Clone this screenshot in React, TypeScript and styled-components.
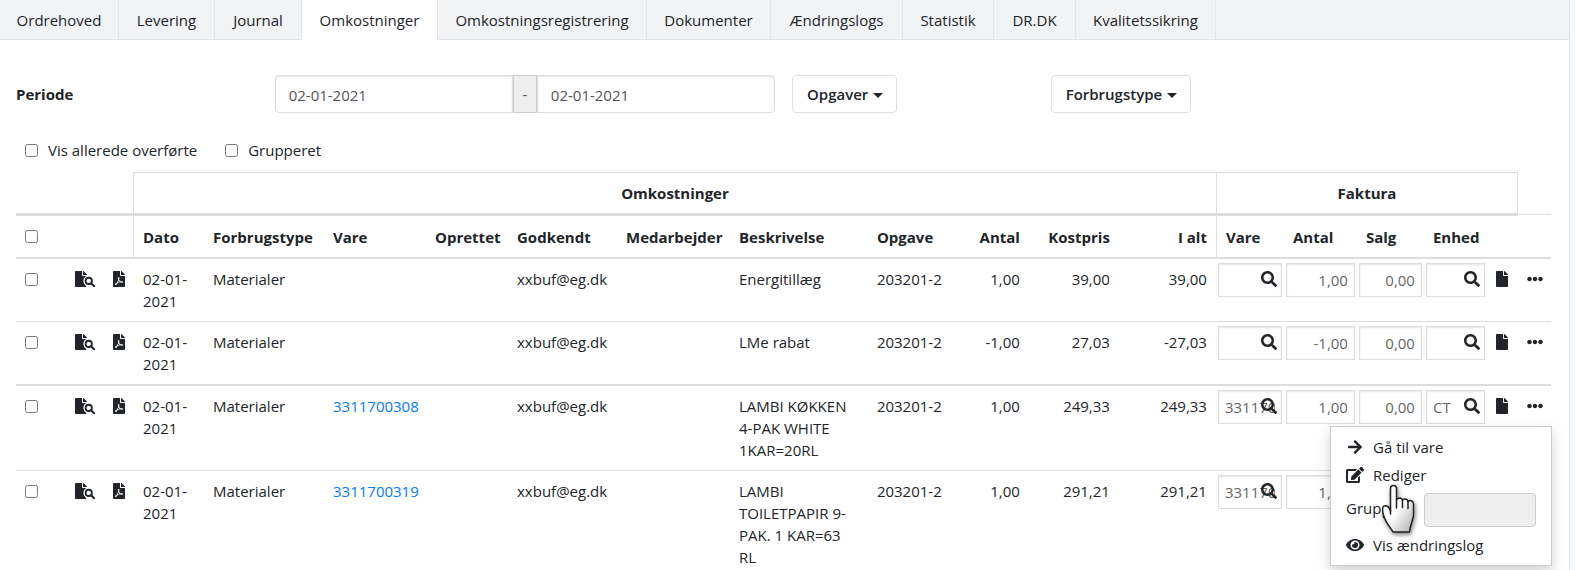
import React from "react";
import styled, { createGlobalStyle, css } from "styled-components";
import {
  FaArrowRight,
  FaEdit,
  FaEllipsisH,
  FaEye,
  FaFile,
  FaFilePdf,
  FaSearch,
} from "react-icons/fa";

const ink = "#212529";
const line = "#dddddd";

const GlobalStyle = createGlobalStyle`
  * { box-sizing: border-box; }
  body {
    margin: 0;
    background: #f8f9fb;
    color: ${ink};
    font-family: "Open Sans", "Noto Sans", sans-serif;
    font-size: 15px;
    line-height: 22px;
  }
  button, input { font: inherit; color: inherit; }
`;

const Panel = styled.main`
  margin-right: 5px;
  min-height: 100vh;
  background: #fff;
  border-right: 1px solid #e3e5e8;
`;

const Tabs = styled.nav`
  display: flex;
  height: 40px;
  background: #f2f3f5;
  box-shadow: inset 0 -1px #e3e5e8;
`;

const Tab = styled.a<{ $width: number; $active?: boolean }>`
  width: ${(p) => p.$width}px;
  display: flex;
  align-items: center;
  justify-content: center;
  border-right: 1px solid #e3e5e8;
  color: ${ink};
  text-decoration: none;
  white-space: nowrap;
  ${(p) => p.$active && css`background: #fff;`}
`;

const Filters = styled.div`
  display: grid;
  grid-template-columns: 2fr 4fr 2fr 4fr;
  align-items: center;
  padding: 35px 1px 0 16px;
`;

const FilterLabel = styled.label`
  font-weight: 700;
`;

const DateRange = styled.div`
  display: flex;
  height: 38px;
  margin-right: 17px;
`;

const DateInput = styled.input<{ $side: "left" | "right" }>`
  flex: 1;
  min-width: 0;
  padding: 2px 13px 0;
  border: 1px solid ${line};
  border-radius: ${(p) => (p.$side === "left" ? "4px 0 0 4px" : "0 4px 4px 0")};
  box-shadow: inset 0 1px 2px rgba(0, 0, 0, 0.1);
  color: #555;
  outline: none;
`;

const RangeDash = styled.span`
  width: 24px;
  display: flex;
  align-items: center;
  justify-content: center;
  border: 1px solid #ccc;
  background: #eee;
  color: #555;
`;

const DropButton = styled.button`
  justify-self: start;
  display: flex;
  align-items: center;
  gap: 5px;
  height: 38px;
  padding: 0 13px 0 14px;
  border: 1px solid ${line};
  border-radius: 4px;
  background: #fff;
  font-weight: 600;
`;

const Caret = styled.span`
  margin-top: 2px;
  border: solid transparent;
  border-width: 5px 5px 0;
  border-top-color: ${ink};
`;

const Options = styled.div`
  display: flex;
  gap: 28px;
  padding: 26px 25px 11px;
`;

const Option = styled.label`
  display: flex;
  align-items: center;
  gap: 10px;
`;

const Check = styled.input.attrs({ type: "checkbox" })`
  display: block;
  width: 13px;
  height: 13px;
  margin: 0;
`;

const Table = styled.table`
  width: calc(100% - 34px);
  margin-left: 16px;
  table-layout: fixed;
  border-collapse: separate;
  border-spacing: 0;
`;

const GroupCell = styled.th<{ $kind: "blank" | "title" | "last" | "end" }>`
  height: 43px;
  padding: 0;
  text-align: center;
  border-bottom: ${(p) => (p.$kind === "end" ? 1 : 2)}px solid ${line};
  ${(p) =>
    (p.$kind === "title" || p.$kind === "last") &&
    css`
      border-top: 1px solid ${line};
      border-left: 1px solid ${line};
    `}
  ${(p) => p.$kind === "last" && css`border-right: 1px solid ${line};`}
`;

const HeadCell = styled.th<{ $right?: boolean; $divider?: boolean; $open?: boolean }>`
  height: 44px;
  padding: 0 9px;
  text-align: ${(p) => (p.$right ? "right" : "left")};
  white-space: nowrap;
  border-top: 1px solid ${(p) => (p.$open ? "transparent" : line)};
  border-bottom: 2px solid ${line};
  ${(p) => p.$divider && css`border-left: 1px solid ${line};`}
`;

const Row = styled.tr<{ $rule: number }>`
  > td {
    border-top: ${(p) => p.$rule}px solid ${line};
  }
`;

const Cell = styled.td<{ $right?: boolean; $indent?: boolean }>`
  padding: 9px;
  vertical-align: top;
  text-align: ${(p) => (p.$right ? "right" : "left")};
  ${(p) => p.$indent && css`padding-left: 10px;`}
`;

const CheckCell = styled(Cell)`
  padding: 14px 0 0 9px;
`;

const IconCell = styled(Cell)`
  padding: 12px 0 0 9px;
`;

const FieldCell = styled(Cell)`
  padding: 4px 2px 0;
`;

const MenuCell = styled(IconCell)`
  position: relative;
`;

const IconButton = styled.button<{ $width?: number }>`
  display: block;
  padding: 0;
  border: 0;
  background: none;
  line-height: 0;
  font-size: 16px;
  cursor: pointer;

  svg {
    width: ${(p) => p.$width ?? 16}px;
    height: 16px;
  }
`;

const ItemLink = styled.a`
  color: #007bff;
  text-decoration: none;
`;

const Field = styled.div`
  position: relative;
`;

const FieldInput = styled.input<{ $right?: boolean }>`
  display: block;
  width: 100%;
  height: 34px;
  padding: 0 6px;
  border: 1px solid ${line};
  background: #fff;
  box-shadow: inset 0 1px 2px rgba(0, 0, 0, 0.1);
  color: #666;
  text-align: ${(p) => (p.$right ? "right" : "left")};
  outline: none;
`;

const Lookup = styled(IconButton)`
  position: absolute;
  top: 8px;
  right: 5px;
`;

const Menu = styled.div`
  position: absolute;
  z-index: 2;
  top: 40px;
  right: -1px;
  width: 222px;
  height: 140px;
  padding: 6px 15px;
  border: 1px solid #ccc;
  background: #fff;
  box-shadow: 0 6px 12px rgba(0, 0, 0, 0.18);
`;

const MenuItem = styled.button`
  display: flex;
  align-items: center;
  gap: 9px;
  width: 100%;
  height: 28px;
  padding: 0;
  border: 0;
  background: none;
  text-align: left;

  svg {
    width: 18px;
    height: 16px;
  }
`;

const MenuField = styled.label`
  display: flex;
  align-items: center;
  justify-content: space-between;
  height: 42px;
`;

const MenuFieldText = styled.span`
  padding-bottom: 4px;
`;

const GroupInput = styled.input`
  width: 112px;
  height: 34px;
  border: 1px solid #ccc;
  border-radius: 4px;
  background: #eee;
`;

const Hand = styled.svg`
  position: absolute;
  top: 56px;
  left: 48px;
  width: 42px;
  height: 56px;
  pointer-events: none;
`;

const FileSearchIcon = () => (
  <svg viewBox="0 0 640 512" fill="none" aria-hidden="true">
    <path
      fill="currentColor"
      d="M224 136V0H24C10.700 0 0 10.700 0 24v464c0 13.300 10.700 24 24 24h336c13.300 0 24-10.700 24-24V160H248c-13.200 0-24-10.800-24-24zm160-14.100v6.100H256V0h6.100c6.400 0 12.500 2.500 17 7l97.900 98c4.500 4.500 7 10.600 7 16.900z"
    />
    <circle cx="440" cy="316" r="172" fill="#fff" />
    <path d="M330 430h70v82h-40z" fill="#fff" />
    <circle cx="440" cy="316" r="100" stroke="currentColor" strokeWidth="58" />
    <path d="M512 390l100 98" stroke="currentColor" strokeWidth="66" strokeLinecap="round" />
  </svg>
);

const HandPointer = () => (
  <Hand viewBox="0 0 42 56" aria-hidden="true">
    <defs>
      <linearGradient id="hand" x1="0" y1="0" x2="1" y2="1">
        <stop offset="0.5" stopColor="#fff" />
        <stop offset="1" stopColor="#aaa" />
      </linearGradient>
      <filter id="handShadow" x="-30%" y="-30%" width="170%" height="170%">
        <feDropShadow dx="1" dy="2" stdDeviation="2" floodOpacity="0.5" />
      </filter>
    </defs>
    <path
      filter="url(#handShadow)"
      fill="url(#hand)"
      stroke="#222"
      strokeWidth="1.500"
      strokeLinejoin="round"
      d="M11.500 28V5.500C11.500 1.500 17.500 1.500 17.500 5.500V17c1-3 5.500-2.500 6 .5c1-2.500 5-2 5.500 1c1.500-2 5.500-1 5.500 2.500v11c0 4-3 9-4 17H14C11.500 44 6.500 40 4.500 32c-1-4-2-8 .5-9c2.500-.8 5 1 6.500 5z"
    />
    <path
      fill="none"
      stroke="#222"
      strokeWidth="1.500"
      strokeLinecap="round"
      d="M11.500 27v4M17.500 17v8M23.500 17.500v7M29 18.500v7"
    />
  </Hand>
);

const tabs = [
  { label: "Ordrehoved", width: 119 },
  { label: "Levering", width: 96 },
  { label: "Journal", width: 87 },
  { label: "Omkostninger", width: 136, active: true },
  { label: "Omkostningsregistrering", width: 209 },
  { label: "Dokumenter", width: 124 },
  { label: "Ændringslogs", width: 132 },
  { label: "Statistik", width: 91 },
  { label: "DR.DK", width: 82 },
  { label: "Kvalitetssikring", width: 140 },
];

// null marks the column that takes the remaining width
const columnWidths: (number | null)[] = [
  50, 38, 29, 71, 120, 102, 82, 109, 113, null, 92, 69, 90, 97, 68, 73, 67, 63, 31, 33,
];

const headings: { label: string; right?: boolean; divider?: boolean }[] = [
  { label: "Dato", divider: true },
  { label: "Forbrugstype" },
  { label: "Vare" },
  { label: "Oprettet" },
  { label: "Godkendt" },
  { label: "Medarbejder" },
  { label: "Beskrivelse" },
  { label: "Opgave" },
  { label: "Antal", right: true },
  { label: "Kostpris", right: true },
  { label: "I alt", right: true },
  { label: "Vare", divider: true },
  { label: "Antal" },
  { label: "Salg" },
  { label: "Enhed" },
  { label: "" },
];

const rows = [
  { item: "", text: "Energitillæg", qty: "1,00", cost: "39,00", total: "39,00", unit: "", rule: 0 },
  { item: "", text: "LMe rabat", qty: "-1,00", cost: "27,03", total: "-27,03", unit: "", rule: 1 },
  { item: "3311700308", text: "LAMBI KØKKEN 4-PAK WHITE 1KAR=20RL", qty: "1,00", cost: "249,33", total: "249,33", unit: "CT", rule: 2, menu: true },
  { item: "3311700319", text: "LAMBI TOILETPAPIR 9-PAK. 1 KAR=63 RL", qty: "1,00", cost: "291,21", total: "291,21", unit: "CT", rule: 1 },
];

const RowMenu = () => (
  <Menu>
    <MenuItem><FaArrowRight />Gå til vare</MenuItem>
    <MenuItem><FaEdit />Rediger</MenuItem>
    <MenuField>
      <MenuFieldText>Gruppe</MenuFieldText>
      <GroupInput disabled />
    </MenuField>
    <MenuItem><FaEye />Vis ændringslog</MenuItem>
    <HandPointer />
  </Menu>
);

export default function App() {
  return (
    <>
      <GlobalStyle />
      <Panel>
        <Tabs>
          {tabs.map((t) => (
            <Tab key={t.label} href="#" $width={t.width} $active={t.active}>
              {t.label}
            </Tab>
          ))}
        </Tabs>

        <Filters>
          <FilterLabel htmlFor="from">Periode</FilterLabel>
          <DateRange>
            <DateInput id="from" $side="left" defaultValue="02-01-2021" />
            <RangeDash>-</RangeDash>
            <DateInput aria-label="Periode til" $side="right" defaultValue="02-01-2021" />
          </DateRange>
          <DropButton>Opgaver<Caret /></DropButton>
          <DropButton>Forbrugstype<Caret /></DropButton>
        </Filters>

        <Options>
          <Option><Check />Vis allerede overførte</Option>
          <Option><Check />Grupperet</Option>
        </Options>

        <Table>
          <colgroup>
            {columnWidths.map((w, i) => (
              <col key={i} width={w ?? undefined} />
            ))}
          </colgroup>
          <thead>
            <tr>
              <GroupCell as="td" colSpan={3} $kind="blank" />
              <GroupCell colSpan={11} $kind="title">Omkostninger</GroupCell>
              <GroupCell colSpan={5} $kind="last">Faktura</GroupCell>
              <GroupCell as="td" $kind="end" />
            </tr>
            <tr>
              <HeadCell><Check aria-label="Vælg alle" /></HeadCell>
              <HeadCell />
              <HeadCell />
              {headings.map((h, i) => (
                <HeadCell key={i} $right={h.right} $divider={h.divider}>{h.label}</HeadCell>
              ))}
              <HeadCell $open />
            </tr>
          </thead>
          <tbody>
            {rows.map((r, i) => (
              <Row key={i} $rule={r.rule}>
                <CheckCell><Check aria-label="Vælg linje" /></CheckCell>
                <IconCell><IconButton $width={20} aria-label="Vis bilag"><FileSearchIcon /></IconButton></IconCell>
                <IconCell><IconButton $width={12} aria-label="Hent PDF"><FaFilePdf /></IconButton></IconCell>
                <Cell $indent>02-01-2021</Cell>
                <Cell>Materialer</Cell>
                <Cell>{r.item && <ItemLink href="#">{r.item}</ItemLink>}</Cell>
                <Cell />
                <Cell>xxbuf@eg.dk</Cell>
                <Cell />
                <Cell>{r.text}</Cell>
                <Cell>203201-2</Cell>
                <Cell $right>{r.qty}</Cell>
                <Cell $right>{r.cost}</Cell>
                <Cell $right>{r.total}</Cell>
                <FieldCell>
                  <Field>
                    <FieldInput aria-label="Vare" defaultValue={r.item} />
                    <Lookup aria-label="Søg vare"><FaSearch /></Lookup>
                  </Field>
                </FieldCell>
                <FieldCell><FieldInput aria-label="Antal" $right defaultValue={r.qty} /></FieldCell>
                <FieldCell><FieldInput aria-label="Salg" $right defaultValue="0,00" /></FieldCell>
                <FieldCell>
                  <Field>
                    <FieldInput aria-label="Enhed" defaultValue={r.unit} />
                    <Lookup aria-label="Søg enhed"><FaSearch /></Lookup>
                  </Field>
                </FieldCell>
                <IconCell><IconButton $width={12} aria-label="Dokument"><FaFile /></IconButton></IconCell>
                <MenuCell>
                  <IconButton aria-label="Flere valg"><FaEllipsisH /></IconButton>
                  {r.menu && <RowMenu />}
                </MenuCell>
              </Row>
            ))}
          </tbody>
        </Table>
      </Panel>
    </>
  );
}
